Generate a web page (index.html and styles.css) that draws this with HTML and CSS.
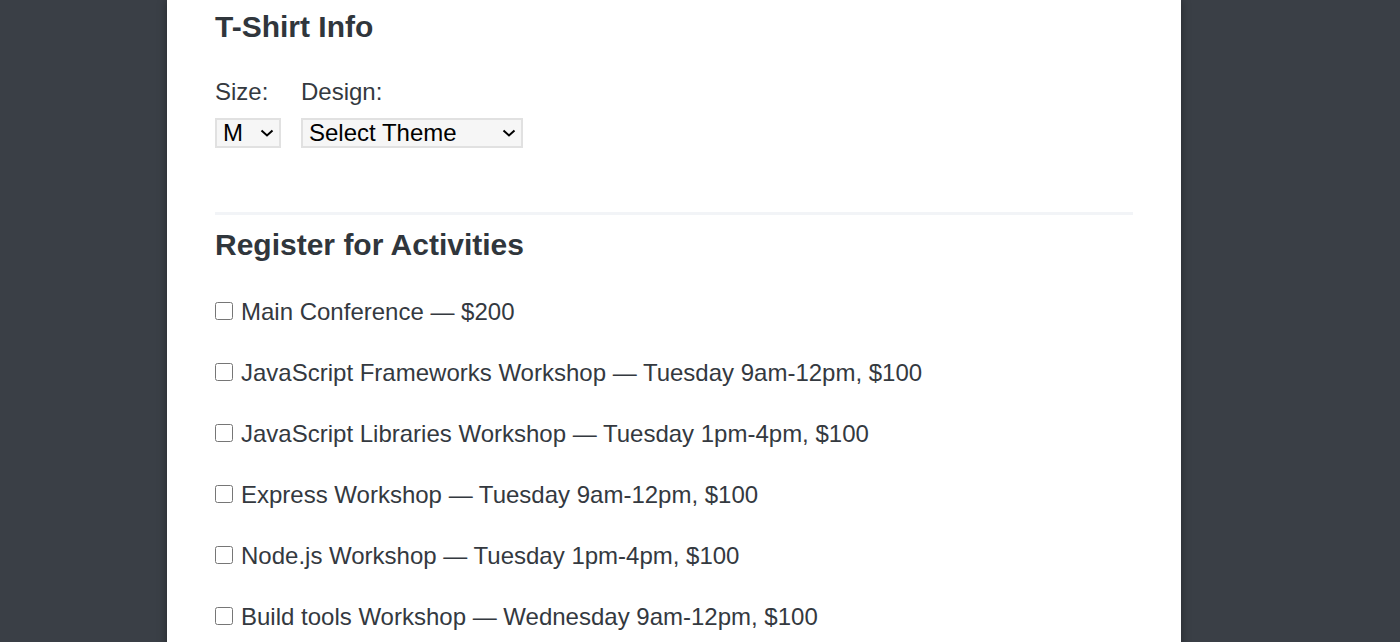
FILE: index.html
```html
<!DOCTYPE html>
<html lang="en">
<head>
<meta charset="utf-8">
<title>Registration</title>
<link rel="stylesheet" href="styles.css">
</head>
<body>
<main class="card">
  <section class="tshirt">
    <h2 class="heading">T-Shirt Info</h2>
    <div class="fields">
      <div class="field">
        <label class="label" for="size">Size:</label>
        <div class="select-wrap size">
          <select id="size" class="select">
            <option>M</option>
          </select>
          <svg class="chev" viewBox="0 0 14 8" width="14" height="8"><path d="M1.5 1.5 L7 6.5 L12.5 1.5" fill="none" stroke="#000" stroke-width="2"/></svg>
        </div>
      </div>
      <div class="field">
        <label class="label" for="design">Design:</label>
        <div class="select-wrap design">
          <select id="design" class="select">
            <option>Select Theme</option>
          </select>
          <svg class="chev" viewBox="0 0 14 8" width="14" height="8"><path d="M1.5 1.5 L7 6.5 L12.5 1.5" fill="none" stroke="#000" stroke-width="2"/></svg>
        </div>
      </div>
    </div>
  </section>
  <hr class="divider">
  <section class="activities">
    <h2 class="heading">Register for Activities</h2>
    <div class="list">
      <label class="item"><input type="checkbox" class="box"><span>Main Conference — $200</span></label>
      <label class="item"><input type="checkbox" class="box"><span>JavaScript Frameworks Workshop — Tuesday 9am-12pm, $100</span></label>
      <label class="item"><input type="checkbox" class="box"><span>JavaScript Libraries Workshop — Tuesday 1pm-4pm, $100</span></label>
      <label class="item"><input type="checkbox" class="box"><span>Express Workshop — Tuesday 9am-12pm, $100</span></label>
      <label class="item"><input type="checkbox" class="box"><span>Node.js Workshop — Tuesday 1pm-4pm, $100</span></label>
      <label class="item"><input type="checkbox" class="box"><span>Build tools Workshop — Wednesday 9am-12pm, $100</span></label>
    </div>
  </section>
</main>
</body>
</html>
```

FILE: styles.css
```css
html, body {
  margin: 0;
  padding: 0;
}
body {
  background: #3a3f46;
  font-family: "Liberation Sans", Arial, sans-serif;
  color: #34393f;
  overflow: hidden;
}
.card {
  width: 1014px;
  box-sizing: border-box;
  margin: 0 0 0 167px;
  min-height: 100vh;
  background: #fff;
  padding: 10px 48px 40px;
  box-shadow: 0 0 9px rgba(0, 0, 0, 0.35);
}
.heading {
  margin: 0;
  font-size: 30px;
  font-weight: bold;
  line-height: 33px;
  color: #30363c;
}
.fields {
  display: flex;
  gap: 20px;
  margin-top: 36px;
}
.field {
  display: flex;
  flex-direction: column;
  gap: 14px;
}
.label {
  font-size: 24px;
  line-height: 25px;
}
.select-wrap {
  position: relative;
  height: 30px;
}
.select-wrap.size { width: 66px; }
.select-wrap.design { width: 222px; }
.select {
  appearance: none;
  -webkit-appearance: none;
  width: 100%;
  height: 30px;
  box-sizing: border-box;
  border: 2px solid #e1e1e1;
  border-radius: 0;
  background: #f6f6f6;
  font-family: "Liberation Sans", Arial, sans-serif;
  font-size: 24px;
  line-height: 26px;
  color: #000;
  padding: 0 0 0 6px;
  margin: 0;
}
.chev {
  position: absolute;
  right: 7px;
  top: 11px;
  pointer-events: none;
}
.divider {
  border: 0;
  height: 3px;
  background: #f2f4f7;
  margin: 64px 0 13px;
}
.list {
  display: flex;
  flex-direction: column;
  gap: 36px;
  margin-top: 38px;
}
.item {
  display: flex;
  align-items: center;
  gap: 8px;
  font-size: 24px;
  line-height: 25px;
}
.box {
  width: 18px;
  height: 18px;
  margin: 0 0 2px 0;
  flex: none;
}
```
